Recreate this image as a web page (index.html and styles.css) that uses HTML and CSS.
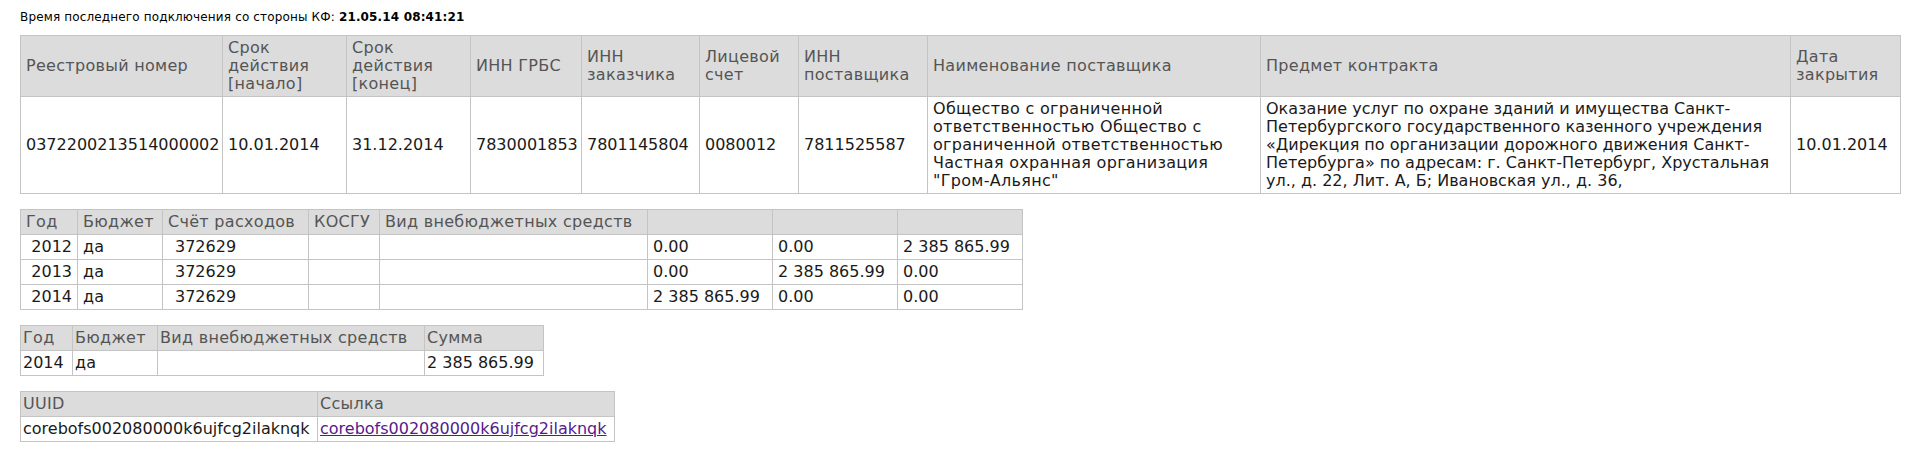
FILE: index.html
```html
<!DOCTYPE html>
<html lang="ru">
<head>
    <meta charset="UTF-8">
    <title>Контракт 0372200213514000002</title>
    <link rel="stylesheet" href="styles.css">
</head>
<body>
    <div class="container">
        <p class="sync">Время последнего подключения со стороны КФ: <b>21.05.14 08:41:21</b></p>

        <!-- основные сведения о контракте -->
        <table class="grid grid-contract">
            <colgroup>
                <col class="c-reg">
                <col class="c-date">
                <col class="c-date">
                <col class="c-inn">
                <col class="c-inn2">
                <col class="c-acc">
                <col class="c-inn3">
                <col class="c-name">
                <col class="c-subj">
                <col class="c-close">
            </colgroup>
            <tr>
                <th>Реестровый номер</th>
                <th>Срок<br>действия<br>[начало]</th>
                <th>Срок<br>действия<br>[конец]</th>
                <th>ИНН ГРБС</th>
                <th>ИНН<br>заказчика</th>
                <th>Лицевой<br>счет</th>
                <th>ИНН<br>поставщика</th>
                <th>Наименование поставщика</th>
                <th>Предмет контракта</th>
                <th>Дата<br>закрытия</th>
            </tr>
            <tr>
                <td>0372200213514000002</td>
                <td>10.01.2014</td>
                <td>31.12.2014</td>
                <td>7830001853</td>
                <td>7801145804</td>
                <td>0080012</td>
                <td>7811525587</td>
                <td class="wide">Общество с ограниченной<br>ответственностью Общество с<br>ограниченной ответственностью<br>Частная охранная организация<br>"Гром-Альянс"</td>
                <td>Оказание услуг по охране зданий и имущества Санкт-<br>Петербургского государственного казенного учреждения<br>«Дирекция по организации дорожного движения Санкт-<br>Петербурга» по адресам: г. Санкт-Петербург, Хрустальная<br>ул., д. 22, Лит. А, Б; Ивановская ул., д. 36,</td>
                <td>10.01.2014</td>
            </tr>
        </table>

        <!-- финансирование по годам -->
        <table class="grid grid-years">
            <colgroup>
                <col class="y-year">
                <col class="y-budget">
                <col class="y-acct">
                <col class="y-kosgu">
                <col class="y-kind">
                <col class="y-sum">
                <col class="y-sum">
                <col class="y-sum">
            </colgroup>
            <tr>
                <th>Год</th>
                <th>Бюджет</th>
                <th>Счёт расходов</th>
                <th>КОСГУ</th>
                <th>Вид внебюджетных средств</th>
                <th></th>
                <th></th>
                <th></th>
            </tr>
            <tr>
                <td class="num">2012</td>
                <td class="wide">да</td>
                <td class="acct">372629</td>
                <td></td>
                <td></td>
                <td>0.00</td>
                <td>0.00</td>
                <td>2 385 865.99</td>
            </tr>
            <tr>
                <td class="num">2013</td>
                <td class="wide">да</td>
                <td class="acct">372629</td>
                <td></td>
                <td></td>
                <td>0.00</td>
                <td>2 385 865.99</td>
                <td>0.00</td>
            </tr>
            <tr>
                <td class="num">2014</td>
                <td class="wide">да</td>
                <td class="acct">372629</td>
                <td></td>
                <td></td>
                <td>2 385 865.99</td>
                <td>0.00</td>
                <td>0.00</td>
            </tr>
        </table>

        <table class="grid grid-tight grid-total">
            <colgroup>
                <col class="t-year">
                <col class="t-budget">
                <col class="t-kind">
                <col class="t-sum">
            </colgroup>
            <tr>
                <th>Год</th>
                <th>Бюджет</th>
                <th>Вид внебюджетных средств</th>
                <th>Сумма</th>
            </tr>
            <tr>
                <td>2014</td>
                <td class="wide">да</td>
                <td></td>
                <td>2 385 865.99</td>
            </tr>
        </table>

        <table class="grid grid-tight grid-uuid">
            <colgroup>
                <col class="u-col">
                <col class="u-col">
            </colgroup>
            <tr>
                <th>UUID</th>
                <th>Ссылка</th>
            </tr>
            <tr>
                <td>corebofs002080000k6ujfcg2ilaknqk</td>
                <td><a href="#">corebofs002080000k6ujfcg2ilaknqk</a></td>
            </tr>
        </table>
    </div>
</body>
</html>
```

FILE: styles.css
```css
/* общая страница */
body {
    margin: 0;
    font-family: "DejaVu Sans", Verdana, sans-serif;
    color: #1a1a1a;
    background: #fff;
}

.container {
    padding: 10px 20px;
}

.sync {
    margin: 0 0 11px;
    font-size: 12px;
    line-height: 14px;
    letter-spacing: 0.15px;
    color: #000;
}

/* таблицы */
.grid {
    border-collapse: collapse;
    table-layout: fixed;
    font-size: 16px;
    line-height: 18px;
    margin-bottom: 15px;
}

.grid th,
.grid td {
    border: 1px solid #c4c4c4;
    padding: 3px 5px;
    text-align: left;
    vertical-align: middle;
    font-weight: normal;
    white-space: nowrap;
    overflow: hidden;
}

.grid th {
    background: #dcdcdc;
    color: #555;
    letter-spacing: 0.3px;
}

.grid td.wide {
    letter-spacing: 0.3px;
}

.grid td.num {
    text-align: right;
}

.grid td.acct {
    padding-left: 12px;
}

.grid-tight th,
.grid-tight td {
    padding-left: 2px;
    padding-right: 2px;
}

.grid a {
    color: #551a8b;
}

/* первая таблица — по ширине страницы */
.grid-contract {
    width: 100%;
}

.c-reg { width: 202px; }
.c-date { width: 124px; }
.c-inn { width: 111px; }
.c-inn2 { width: 118px; }
.c-acc { width: 99px; }
.c-inn3 { width: 129px; }
.c-name { width: 333px; }
.c-subj { width: 530px; }
.c-close { width: 110px; }

/* финансирование по годам */
.grid-years {
    width: 1002px;
}

.y-year { width: 57px; }
.y-budget { width: 85px; }
.y-acct { width: 146px; }
.y-kosgu { width: 71px; }
.y-kind { width: 268px; }
.y-sum { width: 125px; }

/* итог */
.grid-total {
    width: 523px;
}

.t-year { width: 52px; }
.t-budget { width: 85px; }
.t-kind { width: 267px; }
.t-sum { width: 119px; }

/* идентификатор */
.grid-uuid {
    width: 594px;
}

.u-col { width: 297px; }
```
